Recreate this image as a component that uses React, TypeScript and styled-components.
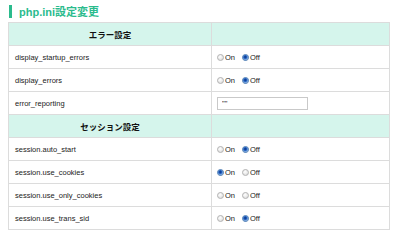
import React from 'react';
import styled, { createGlobalStyle } from 'styled-components';

const GlobalStyle = createGlobalStyle`
  html, body {
    margin: 0;
    padding: 0;
    background: #fff;
  }
  body {
    font-family: "Liberation Sans", Arial, "Noto Sans CJK JP", sans-serif;
    color: #222;
  }
`;

type Setting =
  | { kind: 'section'; label: string }
  | { kind: 'radio'; name: string; value: 'on' | 'off' | null }
  | { kind: 'text'; name: string; value: string };

const settings: Setting[] = [
  { kind: 'section', label: 'エラー設定' },
  { kind: 'radio', name: 'display_startup_errors', value: 'off' },
  { kind: 'radio', name: 'display_errors', value: 'off' },
  { kind: 'text', name: 'error_reporting', value: '""' },
  { kind: 'section', label: 'セッション設定' },
  { kind: 'radio', name: 'session.auto_start', value: 'off' },
  { kind: 'radio', name: 'session.use_cookies', value: 'on' },
  { kind: 'radio', name: 'session.use_only_cookies', value: null },
  { kind: 'radio', name: 'session.use_trans_sid', value: 'off' },
];

const App: React.FC = () => {
  return (
    <Page>
      <GlobalStyle />
      <Title>php.ini設定変更</Title>
      <Table>
        <colgroup>
          <col style={{ width: 203 }} />
          <col />
        </colgroup>
        <tbody>
          {settings.map((s, i) => {
            if (s.kind === 'section') {
              return (
                <tr key={i}>
                  <SectionCell>{s.label}</SectionCell>
                  <SectionCell />
                </tr>
              );
            }
            return (
              <tr key={i}>
                <NameCell>{s.name}</NameCell>
                <ValueCell>
                  {s.kind === 'text' ? (
                    <TextField type="text" defaultValue={s.value} />
                  ) : (
                    <Choices>
                      <Choice>
                        <Radio type="radio" name={s.name} defaultChecked={s.value === 'on'} />
                        On
                      </Choice>
                      <Choice>
                        <Radio type="radio" name={s.name} defaultChecked={s.value === 'off'} />
                        Off
                      </Choice>
                    </Choices>
                  )}
                </ValueCell>
              </tr>
            );
          })}
        </tbody>
      </Table>
    </Page>
  );
};

const Page = styled.div`
  padding: 5px 0 0 8px;
  width: 382px;
`;

const Title = styled.h2`
  margin: 0 0 4px 1px;
  padding: 0 0 0 7px;
  border-left: 3px solid #2bbb8d;
  height: 13px;
  line-height: 14px;
  font-size: 11px;
  font-weight: bold;
  color: #2bbb8d;
`;

const Table = styled.table`
  width: 382px;
  border-collapse: collapse;
  table-layout: fixed;
  font-size: 7.5px;
`;

const Cell = styled.td`
  height: 22px;
  padding: 0 6px;
  border: 1px solid #dcdcdc;
  vertical-align: middle;
`;

const SectionCell = styled(Cell)`
  background: #d5f5ec;
  text-align: center;
  font-size: 8.5px;
  font-weight: bold;
  color: #111;
`;

const NameCell = styled(Cell)`
  color: #222;
`;

const ValueCell = styled(Cell)`
  padding-left: 5px;
`;

const Choices = styled.div`
  display: flex;
  align-items: center;
  gap: 7px;
`;

const Choice = styled.label`
  display: flex;
  align-items: center;
  gap: 1px;
  font-size: 7.5px;
  color: #222;
`;

const Radio = styled.input`
  appearance: none;
  margin: 0;
  width: 7px;
  height: 7px;
  border-radius: 50%;
  border: 1px solid #b4b4b4;
  background: radial-gradient(circle at 40% 35%, #fff 0%, #e6e6e6 60%, #cfcfcf 100%);
  box-sizing: border-box;

  &:checked {
    border-color: #5d88b8;
    background: radial-gradient(circle at 45% 40%, #0b2f78 0%, #1d5cc0 35%, #9fc2ea 75%, #dfe9f5 100%);
  }
`;

const TextField = styled.input`
  box-sizing: border-box;
  width: 91px;
  height: 13px;
  margin: 0;
  padding: 0 4px;
  border: 1px solid #c9c9c9;
  font-family: "Liberation Sans", Arial, sans-serif;
  font-size: 7.5px;
  color: #222;
  outline: none;
`;

export default App;
